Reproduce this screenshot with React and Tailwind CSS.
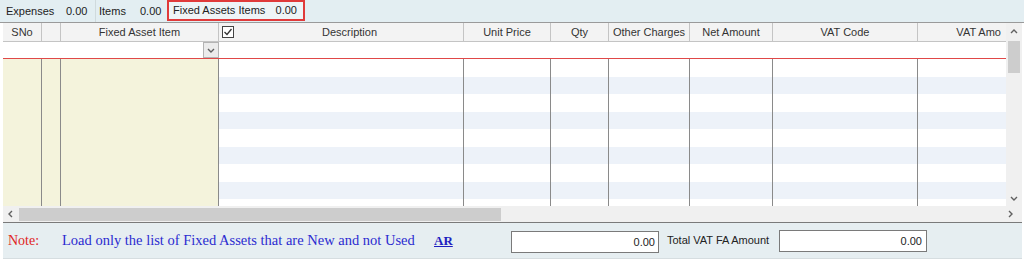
import React from "react";

const cols = [
  { w: 39, label: "SNo", beige: true },
  { w: 19, label: "", beige: true },
  { w: 158, label: "Fixed Asset Item", beige: true },
  { w: 245, label: "Description", check: true },
  { w: 87, label: "Unit Price" },
  { w: 58, label: "Qty" },
  { w: 81, label: "Other Charges" },
  { w: 83, label: "Net Amount" },
  { w: 145, label: "VAT Code" },
  { w: 88, label: "VAT Amo", right: true, last: true },
];

const rows = Array.from({ length: 9 }, (_, i) => i);

function Chevron({ dir = "down", className = "" }) {
  const d =
    dir === "down"
      ? "M2 4 L5 7 L8 4"
      : dir === "up"
      ? "M2 6 L5 3 L8 6"
      : dir === "left"
      ? "M6 2 L3 5 L6 8"
      : "M4 2 L7 5 L4 8";
  return (
    <svg width="10" height="10" viewBox="0 0 10 10" className={className}>
      <path d={d} fill="none" stroke="#606060" strokeWidth="1.4" />
    </svg>
  );
}

export default function App() {
  return (
    <div
      className="w-[1024px] h-[264px] bg-white text-[11px] text-[#222] overflow-hidden"
      style={{ fontFamily: '"Liberation Sans", Arial, sans-serif' }}
    >
      {/* Top bar */}
      <div className="h-[22px] bg-[#e3eef2] flex items-stretch pl-[3px]">
        <div className="flex items-center pl-[3px] w-[93px] border-r border-[#d0dadd]">
          <span className="w-[60px]">Expenses</span>
          <span>0.00</span>
        </div>
        <div className="flex items-center pl-[3px] w-[71px]">
          <span className="w-[41px]">Items</span>
          <span>0.00</span>
        </div>
        <div className="w-[138px] h-[21px] border-2 border-[#e03a3a] flex items-center justify-between pl-[4px] pr-[6px] bg-[#eef4f6]">
          <span>Fixed Assets Items</span>
          <span>0.00</span>
        </div>
      </div>

      {/* Grid + vertical scrollbar */}
      <div className="flex pl-[3px] border-t border-[#9a9a9a]">
        <div className="w-[1003px]">
          {/* Header */}
          <div className="flex h-[19px] bg-[#f3f3f3] border-b border-[#c4c4c4]">
            {cols.map((c, i) => (
              <div
                key={i}
                style={{ width: c.w }}
                className={`flex items-center shrink-0 ${
                  c.last ? "" : "border-r border-[#c4c4c4]"
                } ${c.right ? "justify-end pr-[5px]" : "justify-center"} text-[#333]`}
              >
                {c.check ? (
                  <div className="flex w-full items-center">
                    <div className="w-[17px] flex justify-center">
                      <svg width="12" height="12" viewBox="0 0 12 12">
                        <rect x="0.5" y="0.5" width="11" height="11" fill="#fff" stroke="#444" />
                        <path d="M2.5 6 L5 8.5 L9.5 3" fill="none" stroke="#333" strokeWidth="1.3" />
                      </svg>
                    </div>
                    <span className="flex-1 text-center">{c.label}</span>
                  </div>
                ) : (
                  c.label
                )}
              </div>
            ))}
          </div>
          {/* Filter row */}
          <div className="flex h-[17px] bg-white border-b border-[#e04848]">
            <div className="w-[200px] shrink-0" />
            <div className="w-[16px] h-[16px] bg-[#ececec] border border-[#b4b4b4] flex items-center justify-center">
              <Chevron dir="down" />
            </div>
          </div>
          {/* Body */}
          <div className="h-[147px] overflow-hidden">
            {rows.map((r) => (
              <div key={r} className="flex h-[17.5px]">
                {cols.map((c, i) => (
                  <div
                    key={i}
                    style={{ width: c.w }}
                    className={`shrink-0 ${
                      c.beige
                        ? "bg-[#f4f3dc]"
                        : r % 2 === 1
                        ? "bg-[#edf2f9]"
                        : "bg-white"
                    } ${c.last ? "" : "border-r border-[#8a8a8a]"}`}
                  />
                ))}
              </div>
            ))}
          </div>
        </div>
        {/* Vertical scrollbar */}
        <div className="w-[16px] h-[183px] bg-[#f0f0f0] flex flex-col items-center">
          <div className="h-[18px] flex items-center justify-center">
            <Chevron dir="up" />
          </div>
          <div className="w-[12px] h-[32px] bg-[#cdcdcd]" />
          <div className="flex-1" />
          <div className="h-[16px] flex items-center justify-center">
            <Chevron dir="down" />
          </div>
        </div>
      </div>

      {/* Horizontal scrollbar */}
      <div className="ml-[3px] mr-[2px] h-[17px] bg-[#f0f0f0] flex items-center border-b border-[#7a7a7a]">
        <div className="w-[16px] flex justify-center">
          <Chevron dir="left" />
        </div>
        <div className="w-[482px] h-[13px] bg-[#cdcdcd]" />
        <div className="flex-1" />
        <div className="w-[16px] flex justify-center mr-[4px]">
          <Chevron dir="right" />
        </div>
      </div>

      {/* Footer */}
      <div className="ml-[3px] mr-[2px] h-[36px] bg-[#e6eef1] flex items-center border-b border-[#d6dde0]">
        <span
          className="ml-[5px] w-[54px] text-[#e02424] text-[14px]"
          style={{ fontFamily: '"Liberation Serif", "Times New Roman", serif' }}
        >
          Note:
        </span>
        <span
          className="text-[#2b2bd0] text-[14.5px] w-[372px]"
          style={{ fontFamily: '"Liberation Serif", "Times New Roman", serif' }}
        >
          Load only the list of Fixed Assets that are New and not Used
        </span>
        <span
          className="text-[#1f1fbf] text-[13px] font-bold underline w-[77px]"
          style={{ fontFamily: '"Liberation Serif", "Times New Roman", serif' }}
        >
          AR
        </span>
        <div className="w-[148px] h-[22px] bg-white border border-[#7a7a7a] flex items-center justify-end pr-[3px] mt-[3px]">
          0.00
        </div>
        <span className="ml-[8px] w-[112px]">Total VAT FA Amount</span>
        <div className="w-[148px] h-[22px] bg-white border border-[#7a7a7a] flex items-center justify-end pr-[4px] mt-[1px]">
          0.00
        </div>
      </div>
    </div>
  );
}
